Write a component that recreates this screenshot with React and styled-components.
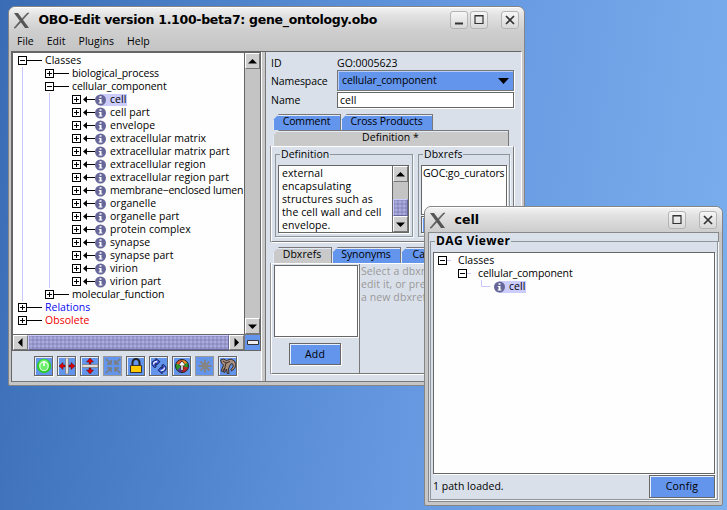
import React from 'react';
import styled, { createGlobalStyle, css } from 'styled-components';

const Global = createGlobalStyle`
  * { box-sizing: border-box; }
  html, body { margin: 0; padding: 0; }
  body { font-family: "Open Sans", "Noto Sans", sans-serif; font-size: 10.5px; line-height: 13px; color: #000; overflow: hidden; }
`;
const panel = '#d9e0ea';
const blue = '#6495ed';

const Desktop = styled.main`
  position: relative; width: 727px; height: 510px; overflow: hidden;
  background: linear-gradient(98deg, #396cb4 0%, #4f84cc 30%, #6598e0 58%, #7bb0ee 100%);
`;
const Window = styled.section`
  position: absolute; left: ${p => p.$x}px; top: ${p => p.$y}px;
  width: ${p => p.$w}px; height: ${p => p.$h}px;
  display: flex; flex-direction: column;
  border: 1px solid #858585; border-radius: 7px 7px 2px 2px;
  background: #c6c6c6; overflow: hidden;
`;
const TitleBar = styled.header`
  height: 25px; flex: none; display: flex; align-items: center; padding: 0 5px 0 4px;
  background: linear-gradient(#f2f2f2, #e2e2e2 30%, #cdcdcd);
  border-top: 1px solid #fff;
`;
const Title = styled.h1`
  margin: 0 auto 0 8.500px; font: bold 12.5px/18px "DejaVu Sans", sans-serif;
  letter-spacing: ${p => p.$ls || 0}px; white-space: nowrap;
`;
const WinButton = styled.span`
  width: 18px; height: 18px; margin-left: ${p => p.$gap || 0}px; display: grid; place-items: center; flex: none;
  border: 1px solid #b4b4b4; border-radius: 3px; background: linear-gradient(#f6f6f6, #d8d8d8);
`;
const Text = styled.span`
  white-space: pre; letter-spacing: ${p => p.$ls ?? 0.03}px;
`;
const MenuBar = styled.nav`
  height: 19px; flex: none; display: flex; padding: 3px 0 0 8px; gap: 13px;
  background: linear-gradient(#cecece, #c4c4c4);
`;
const Frame = styled.div`
  flex: 1; min-height: 0; display: flex; margin: 0 2px 3px; border: 1px solid #666; border-right-color: #fff;
  border-bottom-color: #777; background: ${panel};
`;
const LeftPane = styled.div`
  width: 249px; flex: none; display: flex; flex-direction: column;
`;
const TreeArea = styled.div`
  display: grid; grid-template-columns: 231px 16px; grid-template-rows: 281px 16px;
  border: 1px solid #666; width: 249px; background: #fefefe;
`;
const TreeView = styled.div`
  overflow: hidden; padding-top: 1px; background: #fefefe;
`;
const Row = styled.div`
  height: 13px; display: flex; align-items: center; color: ${p => p.$c || '#000'};
`;
const Guide = styled.i`
  width: 27px; height: 13px; flex: none;
  background: linear-gradient(#c8c8fa, #c8c8fa) 4px 0 / 1px 13px no-repeat;
`;
const Picked = styled.span`
  display: flex; align-items: center; height: 12px; padding-right: 1px;
  background: ${p => (p.$on ? 'linear-gradient(90deg, transparent 5px, #ccccff 5px)' : 'none')};
`;
const VBar = styled.div`
  display: flex; flex-direction: column; justify-content: space-between; width: 16px;
  background: #c4c4c4; border-left: 1px solid #666;
`;
const HBar = styled.div`display: flex; height: 16px; border-top: 1px solid #666; background: #c4c4c4;`;
const ScrollButton = styled.span`
  width: 15px; height: ${p => p.$h || 16}px; display: grid; place-items: center; flex: none;
  background: #cfcfcf; border: 1px solid #777; border-top-color: #fff; border-left-color: #fff;
`;
const Thumb = styled.span`
  flex: ${p => (p.$h ? 'none' : 1)}; height: ${p => (p.$h ? p.$h + 'px' : 'auto')};
  margin-top: ${p => (p.$h ? 'auto' : 0)};
  border: 1px solid #666699; border-top-color: #ccccff; border-left-color: #ccccff;
  background: radial-gradient(circle, #c0c0f0 0.6px, transparent 0.8px) 0 0 / 4px 4px,
    radial-gradient(circle, #7c7cb6 0.6px, transparent 0.8px) 2px 2px / 4px 4px, #9999cc;
`;
const Corner = styled.span`display: grid; place-items: center; background: ${blue}; border-left: 1px solid #777; border-top: 1px solid #777;`;
const Toolbar = styled.div`display: flex; gap: 4px; padding: 5px 0 0 22px;`;
const Tool = styled.span`
  width: 19px; height: 20px; display: grid; place-items: center; background: ${blue};
  border: 1px solid ${p => (p.$off ? '#999' : '#666')};
  box-shadow: ${p => (p.$off ? 'none' : '1px 1px 0 #fff, inset 1px 1px 0 #e6edf8')};
`;
const Divider = styled.div`width: 5px; flex: none; background: linear-gradient(90deg, #fff 1px, #c8c8c8 1px 4px, #777 4px);`;
const RightPane = styled.div`flex: 1; min-width: 0; padding: 3px 7px 0 5px; background: ${panel};`;
const Form = styled.div`
  display: grid; grid-template-columns: 66px 177px; grid-template-rows: 14px 21px 16px; row-gap: 1px;
  align-items: center; height: 56px;
`;
const Combo = styled.div`
  height: 21px; display: flex; align-items: center; justify-content: space-between; padding: 0 4px;
  background: ${blue}; border: 1px solid #777; box-shadow: 1px 1px 0 #fff, inset 1px 1px 0 #b8cdf6;
`;
const Field = styled.div`
  height: 16px; padding: 0 2px; line-height: 14px; background: #fff; border: 1px solid #666; box-shadow: 1px 1px 0 #fff;
`;
const FormText = styled(Text)`padding-top: 2px;`;
const Tabs = styled.div`display: flex; height: 16px; margin-left: 2px; margin-top: ${p => p.$mt || 0}px;`;
const Tab = styled.span`
  width: ${p => p.$w}px; flex: none; display: flex; justify-content: center; line-height: 13px;
  background: ${p => (p.$on ? '#c9c9c9' : blue)};
  border: solid #777; border-width: 1px 1px 0 0; box-shadow: inset 1px 1px 0 #e4ebf8;
  clip-path: polygon(6px 0, 100% 0, 100% 100%, 0 100%, 0 6px);
`;
const TabPanel = styled.div`
  width: 243px; display: flex; height: ${p => p.$h}px; background: ${panel};
  border: 1px solid #777; border-left-color: #fff; border-top-color: #fff; box-shadow: 1px 1px 0 #fff, -1px 0 0 #999;
  ${p => p.$pad && css`padding: 1px 3px 4px 3px; gap: 5px;`}
`;
const Group = styled.fieldset`
  margin: 0; min-width: 0; width: ${p => p.$w}px; height: ${p => p.$h}px; border: 1px solid #8f9699;
  padding: 0 2px; box-shadow: 1px 1px 0 #f4f7fb;
`;
const Legend = styled.legend`margin-left: ${p => p.$ml || 1}px; padding: 0 1px; line-height: 13px; background: ${panel};`;
const Inset = styled.div`
  width: ${p => p.$w}px; height: ${p => p.$h}px; margin-top: ${p => p.$mt || 0}px; display: flex; background: #fefefe; overflow: hidden;
  border: 1px solid #666; box-shadow: 1px 1px 0 #fff;
`;
const Prose = styled.div`
  flex: 1; padding: 1px 0 0 ${p => p.$pl ?? 3}px; white-space: pre; letter-spacing: ${p => p.$ls ?? 0.1}px; color: ${p => p.$c || '#000'};
`;
const Button = styled.span`
  width: ${p => p.$w}px; height: ${p => p.$h}px; margin-top: ${p => p.$mt || 0}px; display: grid; place-items: center; background: ${blue};
  border: 1px solid #666; box-shadow: 1px 1px 0 #fff, inset 1px 1px 0 #e8effc; letter-spacing: .2px;
`;
const HalfPane = styled.div`
  width: 88px; flex: none; display: flex; flex-direction: column; align-items: flex-start;
  border-right: 1px solid #777; padding: 1px 0 0 2px;
`;
const AddSlot = styled.div`padding: 6px 0 0 15px;`;
const DagFrame = styled.div`flex: 1; margin: 0 3px 3px; border: 1px solid #888; background: ${panel}; padding: 1px;`;
const DagBody = styled.div`display: flex; flex-direction: column; margin-top: 4px;`;
const Status = styled.div`display: flex; justify-content: space-between; align-items: center; height: 24px;`;
const BoldLegend = styled(Legend)`font-weight: bold; font-size: 12px; line-height: 14px;`;
const Indent = styled.i`width: ${p => p.$w}px; flex: none;`;
const Label = styled(Text)`margin-left: ${p => p.$ml ?? 3}px;`;
const Glyph = styled.svg`flex: none; display: block;`;

const XLogo = () => (
  <Glyph width="17" height="17" viewBox="0 0 17 17">
    <path d="M1 1h4l11 15h-4z" fill="#555" />
    <path d="M14.5 1h1.3L9.5 8l-.7-1zM1 16h1.4l5.4-6-.7-1z" fill="#555" stroke="#666" strokeWidth=".8" />
  </Glyph>
);
const WinGlyph = ({ k }) => (
  <Glyph width="12" height="12" viewBox="0 0 12 12" fill="none" stroke="#333">
    {k === 'min' && <path d="M2 9.500h8" strokeWidth="2" />}
    {k === 'max' && <path d="M2 1.500h8v8H2zM2 2h8" strokeWidth="1.200" />}
    {k === 'close' && <path d="M2 2l8 8M10 2l-8 8" strokeWidth="1.700" />}
  </Glyph>
);
const Arrow = ({ d }) => (
  <Glyph width="9" height="9" viewBox="0 0 9 9">
    <path d={{ up: 'M4.5 2L9 6.5H0z', down: 'M0 2.5h9L4.5 7z', left: 'M2 4.5L6.5 0v9z', right: 'M7 4.5L2.5 0v9z' }[d]} />
  </Glyph>
);
const Toggle = ({ open, line = 0, light, arrow }) => (
  <Glyph width={line + 9} height="13" viewBox={`0 0 ${line + 9} 13`} shapeRendering="crispEdges">
    <rect x=".5" y="2.500" width="8" height="8" fill="#fff" stroke="#000" />
    <path d={open ? 'M2 6.500h5' : 'M2 6.500h5M4.500 4v5'} stroke="#000" />
    {!arrow && line > 0 && <path d={`M9 6.500h${line}`} stroke={light ? '#c8c8fa' : '#000'} />}
    {arrow && <path d="M12 6.500h12" stroke="#000" />}
    {arrow && <path d="M11 6.500l4-3.500v7z" shapeRendering="auto" />}
  </Glyph>
);
const Info = () => (
  <Glyph width="11" height="12" viewBox="0 0 11 12">
    <circle cx="5.500" cy="6" r="5.500" fill="#666699" />
    <path d="M4.500 2.200h2v1.600h-2zM3.800 5h2.700v3.600h.9v1H3.700v-1h.9V6h-.8z" fill="#fff" />
  </Glyph>
);
const Elbow = () => (
  <Glyph width="13" height="13"><path d="M.5 0v6.500h9" fill="none" stroke="#c8c8fa" /></Glyph>
);

const leaves = ['cell', 'cell part', 'envelope', 'extracellular matrix', 'extracellular matrix part', 'extracellular region',
  'extracellular region part', 'membrane−enclosed lumen', 'organelle', 'organelle part', 'protein complex', 'synapse',
  'synapse part', 'virion', 'virion part'];

const Branch = ({ name, open }) => (
  <Row><Indent $w={5} /><Guide /><Toggle open={open} line={15} /><Label $ls={-0.1}>{name}</Label></Row>
);
const Root = ({ name, open, color }) => (
  <Row $c={color}><Indent $w={5} /><Toggle open={open} line={15} /><Label>{name}</Label></Row>
);
const Leaf = ({ name, on }) => (
  <Row>
    <Indent $w={5} /><Guide /><Guide /><Toggle arrow line={14} />
    <Picked $on={on}><Info /><Label $ml={4} $ls={name.startsWith('membrane') ? -0.2 : 0.05}>{name}</Label></Picked>
  </Row>
);

const toolArt = [
  <g><circle cx="8" cy="8" r="7.200" fill="#2ecc2e" /><circle cx="8" cy="6.500" r="5" fill="#6cf06c" /><circle cx="8" cy="8.200" r="4.200" fill="none" stroke="#d8ffd8" strokeWidth="1.300" /><path d="M8 3v5" stroke="#f4fff4" strokeWidth="1.600" /></g>,
  <g><path d="M6.500 0h3v16h-3z" fill="#ddd" stroke="#777" strokeWidth=".7" /><path d="M0 8l4-3.500V7h2v2H4v2.500zM16 8l-4-3.500V7h-2v2h2v2.500z" fill="#e00000" stroke="#300" strokeWidth=".4" /></g>,
  <g><path d="M0 6.500h16v3H0z" fill="#ddd" stroke="#777" strokeWidth=".7" /><path d="M8 0l3.500 4H9v2H7V4H4.500zM8 16l3.500-4H9v-2H7v2H4.500z" fill="#e00000" stroke="#300" strokeWidth=".4" /></g>,
  <g stroke="#7c7c7c" fill="none" strokeWidth="1.600"><path d="M1 1l4.500 4.500M15 1l-4.500 4.500M1 15l4.500-4.500M15 15l-4.500-4.500M2 6h4V2M14 6h-4V2M2 10h4v4M14 10h-4v4" /></g>,
  <g><path d="M4.500 8V4.500a3.500 3.500 0 017 0V8" fill="none" stroke="#222" strokeWidth="2" /><path d="M2.500 7.500h11v7h-11z" fill="#ffc800" stroke="#333" /></g>,
  <g stroke="#10102c" strokeWidth=".7" strokeLinejoin="round">
    <path d="M3.500 9.500C-.5 7 .3 2.500 5 2L4.800.3 9 3.700 5.600 7.300 5.400 5.500C4 5.800 4 7.500 5.200 9z" fill="#3450d8" />
    <path d="M12.500 6.500c4 2.500 3.200 7-1.500 7.500l.2 1.700L7 12.300 10.400 8.700l.2 1.800C12 10.200 12 8.500 10.800 7z" fill="#3450d8" />
    <path d="M2.500 6.500C2.600 4.600 4 3.500 6.300 3.500M13.500 9.500c-.1 1.900-1.500 3-3.800 3" stroke="#e8eeff" strokeWidth="1.400" fill="none" />
  </g>,
  <g>
    <circle cx="8" cy="8" r="6.500" fill="#2a9a2a" />
    <path d="M8 8L2 5.500A6.500 6.500 0 018 1.500z" fill="#e0562a" />
    <path d="M8 8V1.500a6.500 6.500 0 015.500 3z" fill="#f09028" />
    <path d="M8 8l6.300 1.500A6.500 6.500 0 018 14.500z" fill="#c02828" />
    <path d="M8 8v6.500a6.500 6.500 0 01-5-2.300z" fill="#5c38a8" />
    <circle cx="8" cy="8" r="6.500" fill="none" stroke="#222" />
    <path d="M8 12.500V5M5.500 7.500L8 4.500l2.500 3" stroke="#222" strokeWidth="2.600" fill="none" />
    <path d="M8 12V5M5.800 7.200L8 4.700l2.200 2.500" stroke="#fff" strokeWidth="1.500" fill="none" />
  </g>,
  <g stroke="#848484" strokeWidth="2"><path d="M8 1.500v13M1.500 8h13M3.500 3.500l9 9M12.500 3.500l-9 9" /></g>,
  <g fill="#a98f80" stroke="#2c221c" strokeWidth=".9" strokeLinejoin="round">
    <path d="M.5 2l3-1 3 1.500L11 1l3.500 2L16 7l-1.500 3.500-3 2.500-.5-1.500L13.500 8 12 5.500l-2 1.500L8.500 11 9 15.500H7.300L6.500 11l-1.700 3.500-1.300-.5L5 9.500l-2.500 4-1.300-.7L3.500 7 2 5.500z" />
    <path d="M3 3l3 2 4-1.500M6 5L5 9" fill="none" />
  </g>,
];

export default function App() {
  return (
    <Desktop>
      <Global />
      <Window $x={8} $y={6} $w={517} $h={380}>
        <TitleBar>
          <XLogo />
          <Title $ls={-0.29}>OBO-Edit version 1.100-beta7: gene_ontology.obo</Title>
          <WinButton><WinGlyph k="min" /></WinButton>
          <WinButton $gap={2}><WinGlyph k="max" /></WinButton>
          <WinButton $gap={13}><WinGlyph k="close" /></WinButton>
        </TitleBar>
        <MenuBar><Text>File</Text><Text>Edit</Text><Text>Plugins</Text><Text>Help</Text></MenuBar>
        <Frame>
          <LeftPane>
            <TreeArea>
              <TreeView>
                <Root name="Classes" open />
                <Branch name="biological_process" />
                <Branch name="cellular_component" open />
                {leaves.map((n, i) => <Leaf key={n} name={n} on={i === 0} />)}
                <Branch name="molecular_function" />
                <Root name="Relations" color="#0a0af0" />
                <Root name="Obsolete" color="#f00000" />
              </TreeView>
              <VBar><ScrollButton><Arrow d="up" /></ScrollButton><ScrollButton><Arrow d="down" /></ScrollButton></VBar>
              <HBar><ScrollButton $h={15}><Arrow d="left" /></ScrollButton><Thumb /><ScrollButton $h={15}><Arrow d="right" /></ScrollButton></HBar>
              <Corner><Glyph width="12" height="5"><path d="M.5.5h11v4H.5z" fill="#eee" stroke="#333" /></Glyph></Corner>
            </TreeArea>
            <Toolbar>
              {toolArt.map((a, i) => (
                <Tool key={i} $off={i === 3 || i === 7}><Glyph width="16" height="16" viewBox="0 0 16 16">{a}</Glyph></Tool>
              ))}
            </Toolbar>
          </LeftPane>
          <Divider />
          <RightPane>
            <Form>
              <FormText>ID</FormText><FormText $ls={0}>GO:0005623</FormText>
              <FormText $ls={-0.1}>Namespace</FormText>
              <Combo><Text $ls={-0.1}>cellular_component</Text><Glyph width="11" height="6"><path d="M0 0h11L5.500 6z" /></Glyph></Combo>
              <Text>Name</Text><Field><Text>cell</Text></Field>
            </Form>
            <Tabs $mt={3}><Tab $w={68}><Text $ls={-0.1}>Comment</Text></Tab><Tab $w={92}><Text $ls={-0.1}>Cross Products</Text></Tab></Tabs>
            <Tabs><Tab $w={236} $on><Text>Definition *</Text></Tab></Tabs>
            <TabPanel $h={96} $pad>
              <Group $w={138} $h={89}>
                <Legend $ml={2}><Text>Definition</Text></Legend>
                <Inset $w={131} $h={68} $mt={4}>
                  <Prose>{'external\nencapsulating\nstructures such as\nthe cell wall and cell\nenvelope.'}</Prose>
                  <VBar>
                    <ScrollButton><Arrow d="up" /></ScrollButton>
                    <Thumb $h={17} />
                    <ScrollButton><Arrow d="down" /></ScrollButton>
                  </VBar>
                </Inset>
              </Group>
              <Group $w={92} $h={89}>
                <Legend $ml={2}><Text>Dbxrefs</Text></Legend>
                <Inset $w={86} $h={50} $mt={4}><Prose $pl={1} $ls={-0.08}>GOC:go_curators</Prose></Inset>
                <Button $w={86} $h={17} $mt={1} />
              </Group>
            </TabPanel>
            <Tabs $mt={5}><Tab $w={59} $on><Text>Dbxrefs</Text></Tab><Tab $w={69}><Text $ls={-0.1}>Synonyms</Text></Tab><Tab $w={68}><Text>Category</Text></Tab></Tabs>
            <TabPanel $h={111}>
              <HalfPane><Inset $w={84} $h={72} /><AddSlot><Button $w={52} $h={22}>Add</Button></AddSlot></HalfPane>
              <Prose $pl={1} $c="#999">{'Select a dbxref to\nedit it, or press add for\na new dbxref'}</Prose>
            </TabPanel>
          </RightPane>
        </Frame>
      </Window>

      <Window $x={424} $y={206} $w={299} $h={300}>
        <TitleBar>
          <XLogo />
          <Title>cell</Title>
          <WinButton><WinGlyph k="max" /></WinButton>
          <WinButton $gap={13}><WinGlyph k="close" /></WinButton>
        </TitleBar>
        <DagFrame>
          <Group $w={288} $h={266}>
            <BoldLegend $ml={2}><Text $ls={0.4}>DAG Viewer</Text></BoldLegend>
            <DagBody>
              <Inset $w={282} $h={222}>
                <TreeView>
                  <Row><Indent $w={4} /><Toggle open light line={4} /><Label $ml={7}>Classes</Label></Row>
                  <Row><Indent $w={24} /><Toggle open light line={4} /><Label $ml={7} $ls={-0.1}>cellular_component</Label></Row>
                  <Row><Indent $w={47} /><Elbow /><Picked $on><Info /><Label $ml={4}>cell</Label></Picked></Row>
                </TreeView>
              </Inset>
              <Status><Text>1 path loaded.</Text><Button $w={66} $h={23}>Config</Button></Status>
            </DagBody>
          </Group>
        </DagFrame>
      </Window>
    </Desktop>
  );
}
